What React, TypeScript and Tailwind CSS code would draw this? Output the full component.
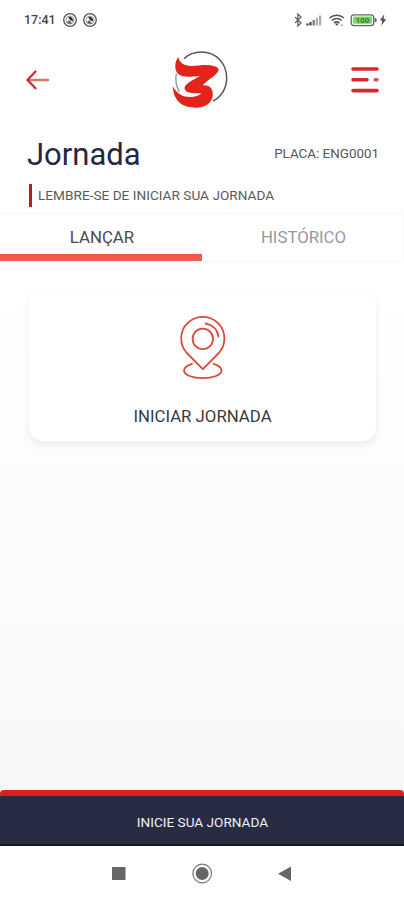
function DiscIcon() {
  return (
    <svg width="16" height="16" viewBox="0 0 16 16" fill="none">
      <circle cx="8" cy="8" r="6.3" stroke="#555" strokeWidth="1.3" />
      <circle cx="8" cy="8" r="4" stroke="#999" strokeWidth=".9" />
      <path d="M6 4.800c3-.6 5.100 1 5.200 4.600L8.200 8z" fill="#222" />
      <path d="M5 10.200 7.200 8l3 3.200c-2 1.100-4.400.6-5.200-1z" fill="#666" />
    </svg>
  );
}

function StatusBar() {
  return (
    <div className="flex h-10 items-center justify-between pl-6 pr-4">
      <div className="flex items-center">
        <span className="w-[38px] pt-px text-[12.5px] font-medium leading-none text-[#444]">17:41</span>
        <div className="flex gap-1">
          <DiscIcon />
          <DiscIcon />
        </div>
      </div>
      <svg width="96" height="16" viewBox="0 0 96 16" fill="none">
        {/* bluetooth */}
        <path d="m3 5 6 6-3.200 3V2l3.200 3-6 6" stroke="#666" strokeWidth="1.300" />
        {/* sinal */}
        <path d="M15.500 13.500v-2M18.500 13.500V10" stroke="#444" strokeWidth="2.200" />
        <path d="M21.700 13.500V8" stroke="#777" strokeWidth="2.200" />
        <path d="M24.900 13.500V6M28.100 13.500V3.500" stroke="#aaa" strokeWidth="2.200" />
        {/* wifi */}
        <path d="M37.500 6c4.300-3.600 10.200-3.600 14.500 0M39.700 8.500c3-2.400 7.100-2.400 10.100 0M42 10.800c1.700-1.200 3.800-1.200 5.500 0" stroke="#555" strokeWidth="1.600" />
        <path d="m44.800 14-2-2.600h4z" fill="#555" />
        <circle cx="50" cy="13.200" r=".9" fill="#999" />
        {/* bateria */}
        <rect x="59.200" y="2.800" width="22.500" height="10.800" rx="2.800" fill="#fff" stroke="#666" strokeWidth="1.300" />
        <path d="M82.700 5.800v4.800l2-1.200V7z" fill="#666" />
        <rect x="61" y="4.600" width="19" height="7.200" rx="1.300" fill="#7ed561" />
        <text x="70.500" y="11" textAnchor="middle" fontSize="7.800" fontWeight="700" fontFamily="Roboto" fill="#2f8020">100</text>
        <path d="m92.300 2.300-4.500 6.200h2.700l-1.400 5.200 5.100-6.500h-2.800z" fill="#444" />
      </svg>
    </div>
  );
}

function Logo() {
  return (
    <svg width="60" height="64" viewBox="0 0 180 192" fill="none" className="-ml-[5px]">
      <path d="M42 32C56 18 74 12 94 12c44 0 76 34 76 77 0 32-16 58-41 70" stroke="#50575f" strokeWidth="4.500" />
      <path d="M19 76c-4 21 0 40 9 56" stroke="#8d9698" strokeWidth="4" />
      <path
        d="M25 27C28 43 39 50 56 53C80 56 106 47 131 54C143 57 148 62 145 69C139 83 108 99 98 112C118 110 131 121 128 145C124 168 104 179 76 179C40 179 11 162 8 114C20 138 40 147 61 147C76 147 86 144 94 136C74 136 48 137 44 123C40 109 68 97 90 84C66 86 40 90 26 79C12 67 13 42 25 27Z"
        fill="#e3241d"
      />
    </svg>
  );
}

function Header() {
  return (
    <header className="flex h-20 items-center justify-between pl-[26px] pr-[25px]">
      <button aria-label="Voltar" className="w-7">
        <svg width="24" height="22" viewBox="0 0 24 22" fill="none" strokeLinecap="round">
          <path d="M2 11h20" stroke="#d9766c" strokeWidth="2.400" />
          <path d="M9.500 2.500 1.500 11l8 8.300" stroke="#cf2630" strokeWidth="2.200" />
        </svg>
      </button>
      <Logo />
      <button aria-label="Menu" className="w-7">
        <svg width="28" height="26" viewBox="0 0 28 26" stroke="#d42a2f" strokeWidth="3.600" strokeLinecap="round">
          <path d="M2 2h24M2 12.800h14M2 23.600h24" />
          <path d="M24.200 12.800H26" stroke="#dc5154" />
        </svg>
      </button>
    </header>
  );
}

function PinIcon() {
  return (
    <svg width="46" height="64" viewBox="0 0 46 64" fill="none" stroke="#da4a3e" strokeWidth="1.800" strokeLinecap="round">
      <path d="M22.800 53.200 6.800 37A21.600 21.600 0 1 1 38.800 37z" strokeLinejoin="round" />
      <circle cx="22.800" cy="22.900" r="10.200" />
      <path d="M25.600 7.500c7 1.300 12 6.200 12.800 13.200" />
      <path d="M12 47.800C7 49.400 4 51.600 4 54.500c0 4.400 8.400 7.700 18.800 7.700s18.800-3.300 18.800-7.700c0-2.900-3-5.100-8-6.700" />
    </svg>
  );
}

export default function App() {
  return (
    <div className="flex h-[900px] w-[404px] flex-col overflow-hidden bg-white font-['Roboto',sans-serif]">
      <StatusBar />
      <Header />

      <section className="h-[93px] pl-[27px] pr-[25px] pt-3">
        <div className="flex h-11 items-center justify-between">
          <h1 className="text-[31px] leading-none text-[#25273f]">Jornada</h1>
          <span className="text-[13.4px] text-[#555]">PLACA: ENG0001</span>
        </div>
        <div className="ml-0.5 mt-2 flex h-[23px] items-center border-l-[3px] border-[#b81c22] pl-1.5">
          <p className="whitespace-nowrap text-[13.65px] text-[#5a5a5a]">LEMBRE-SE DE INICIAR SUA JORNADA</p>
        </div>
      </section>

      <nav className="flex h-[49px] shrink-0 border-y border-[#f8f8f8] text-[16.8px]">
        <button className="w-[202px] border-b-[7px] border-[#f4574e] pl-0.5 pt-[7px] text-[#4a4a4a]">LANÇAR</button>
        <button className="flex-1 border-r border-[#f8f8f8] pl-0.5 text-[#999]">HISTÓRICO</button>
      </nav>

      <main className="flex-1 bg-linear-to-b from-white via-[#fcfcfc] to-[#f7f7f7] pl-[29px] pr-7 pt-7">
        <button className="flex h-[151px] w-full flex-col items-center rounded-[14px] bg-white pt-[26px] shadow-[0_4px_7px_rgba(40,40,60,0.08)]">
          <PinIcon />
          <span className="mt-6 text-[16.8px] text-[#3a3a3a]">INICIAR JORNADA</span>
        </button>
      </main>

      <footer className="shrink-0 bg-[#f7f7f7]">
        <button className="flex h-14 w-full items-center justify-center rounded-t-[4px] border-b-2 border-t-[6px] border-b-[#12143a] border-t-[#df2018] bg-[#282c43] pl-px pt-1 text-[13.6px] text-[#f0f0f6]">
          INICIE SUA JORNADA
        </button>
        <div className="flex h-[54px] justify-center bg-white pt-[17px]">
          <svg width="182" height="22" viewBox="0 0 182 22" fill="#666">
            <rect x="1" y="4" width="13.500" height="13" />
            <circle cx="91.200" cy="10.500" r="6.500" />
            <circle cx="91.200" cy="10.500" r="9.300" fill="none" stroke="#777" strokeWidth="1.200" />
            <path d="M167 10.800 180 3.500v14.600z" />
          </svg>
        </div>
      </footer>
    </div>
  );
}
